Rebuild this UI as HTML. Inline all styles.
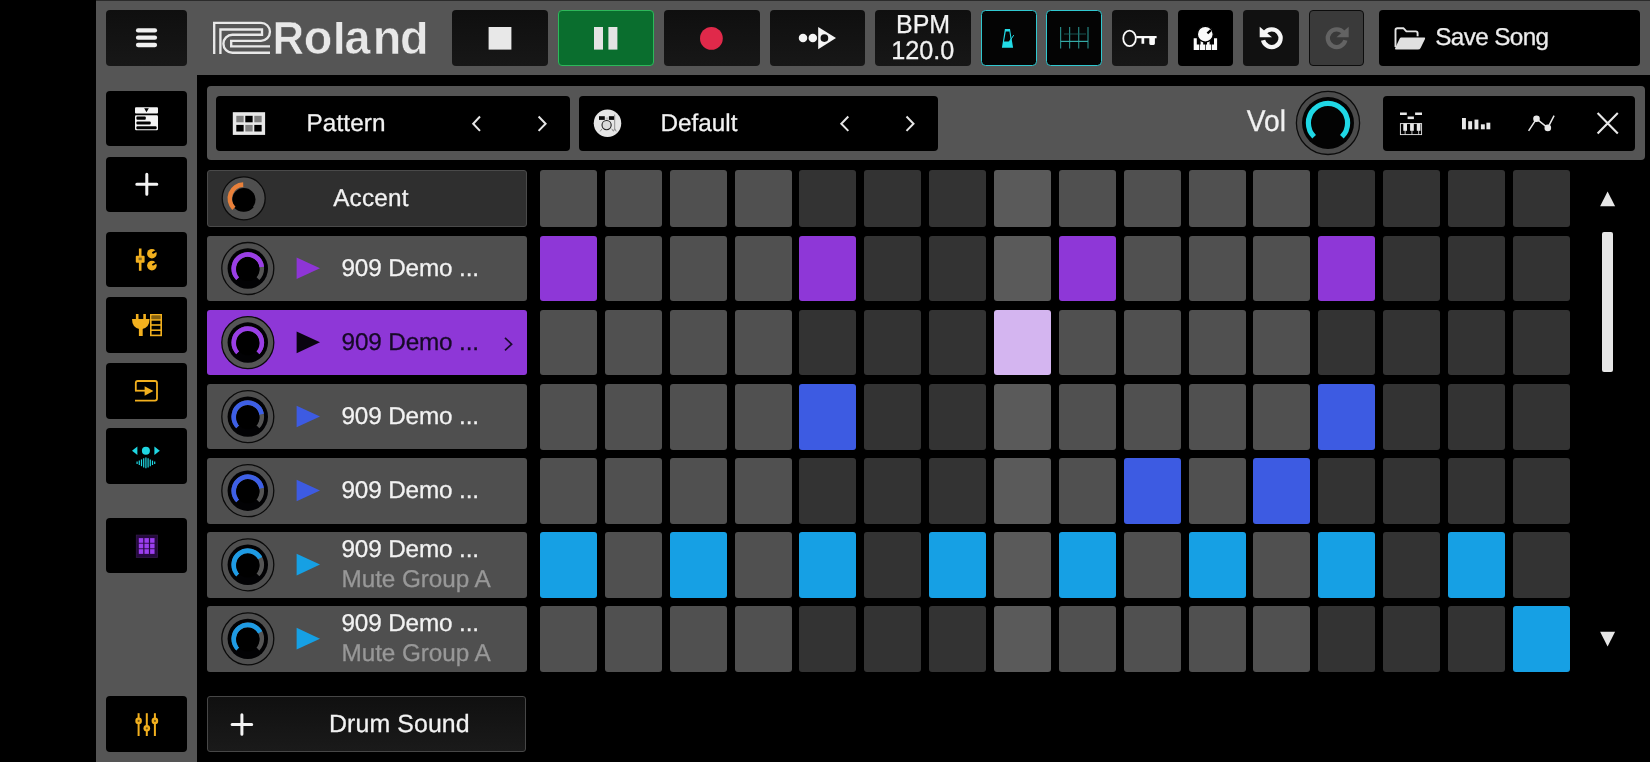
<!DOCTYPE html>
<html lang="en">
<head>
<meta charset="utf-8">
<title>Roland Zenbeats - Drum Pattern</title>
<style>
html,body{margin:0;padding:0;background:#000;}
body{width:1650px;height:762px;position:relative;overflow:hidden;font-family:"Liberation Sans",sans-serif;color:#f2f2f2;}
.abs{position:absolute;}
.gray{background:#555;}
.btn{position:absolute;border-radius:4px;background:linear-gradient(#0f0f0f,#171717);top:10px;height:55.5px;}
.sb{position:absolute;left:106px;width:81px;height:55.5px;border-radius:4px;background:#000;}
.txt{position:absolute;white-space:nowrap;font-size:23.6px;line-height:28px;height:28px;}
.row{position:absolute;left:207px;width:320px;height:65.5px;border-radius:3px;background:#4f4f4f;}
.cell{position:absolute;width:57px;border-radius:3px;}
.L{background:#505050;}
.D{background:#333;}
.P{background:#8e37d7;}
.Q{background:#d4b5f0;}
.B{background:#3d5be2;}
.C{background:#16a0e4;}
svg{position:absolute;left:0;top:0;overflow:visible;}
</style>
</head>
<body>

<div class="abs" style="left:96px;top:0;width:1554px;height:75px;background:#2b2b2b"></div>
<div class="abs gray" style="left:96px;top:1px;width:1554px;height:74px"></div>
<div class="abs gray" style="left:96px;top:70px;width:101px;height:692px"></div>
<div class="abs gray" style="left:207px;top:86px;width:1438px;height:74px;border-radius:4px"></div>
<div class="btn" style="left:106px;width:81px"></div>
<div class="btn" style="left:452px;width:96px"></div>
<div class="btn" style="left:558px;width:96px;top:9.5px;height:56px;background:#0a6e2e;box-sizing:border-box;border:1.5px solid #2db85a"></div>
<div class="btn" style="left:663.5px;width:96px"></div>
<div class="btn" style="left:769.5px;width:95.5px"></div>
<div class="btn" style="left:875px;width:95.5px"></div>
<div class="btn" style="left:980.5px;width:56px;top:9.8px;height:56.2px;background:#040404;box-sizing:border-box;border:1.6px solid #30c8d0;border-radius:4.5px"></div>
<div class="btn" style="left:1046.3px;width:56px;top:9.8px;height:56.2px;background:#040404;box-sizing:border-box;border:1.6px solid #30c8d0;border-radius:4.5px"></div>
<div class="btn" style="left:1112.3px;width:55.5px"></div>
<div class="btn" style="left:1178px;width:55px;background:#000"></div>
<div class="btn" style="left:1243px;width:55.5px;background:#111"></div>
<div class="btn" style="left:1309px;width:55px;background:#3a3a3a;box-sizing:border-box;border:1.5px solid #0c0c0c"></div>
<div class="btn" style="left:1379.3px;width:261px;background:#000"></div>
<svg width="1650" height="80" viewBox="0 0 1650 80" style="will-change:transform">
<rect x="135.9" y="28.25" width="21.2" height="4.3" rx="2.15" fill="#f0f0f0"/>
<rect x="135.9" y="35.55" width="21.2" height="4.3" rx="2.15" fill="#f0f0f0"/>
<rect x="135.9" y="42.85" width="21.2" height="4.3" rx="2.15" fill="#f0f0f0"/>
<g fill="none" stroke="#e8e8e8" stroke-width="2.35" stroke-linejoin="miter">
<path d="M214.2 54.1V22.9H261A8.95 8.95 0 0 1 261 40.8H231.2V46.3H270"/>
<path d="M220.4 54.1V29.5H262V34.7H232.4A9 9 0 0 0 232.4 52.7H270"/>
</g>
<clipPath id="rc"><rect x="270" y="21.9" width="170" height="40"/></clipPath>
<g clip-path="url(#rc)"><text id="roland" transform="translate(0 53.8) scale(0.96 1)" x="283.95 316.29 346.60 358.76 388.27 416.73" y="0" font-family="Liberation Sans, sans-serif" font-weight="bold" font-size="48.7" fill="#e8e8e8" stroke="#555" stroke-width="0.6"><tspan font-size="45.6">R</tspan>oland</text></g>
<rect x="488.6" y="27" width="22.8" height="22.6" fill="#e8e8e8"/>
<rect x="594" y="27" width="9" height="22.6" fill="#e4e4e4"/><rect x="608.4" y="27" width="9" height="22.6" fill="#e4e4e4"/>
<circle cx="711.4" cy="38.4" r="11.4" fill="#e0294a"/>
<circle cx="803" cy="38.1" r="4.25" fill="#f4f4f4"/><circle cx="812.8" cy="38.1" r="4.25" fill="#f4f4f4"/>
<path d="M818.2 26.9V49.3L836 38.1Z" fill="#f4f4f4"/><circle cx="824.4" cy="38.1" r="3.85" fill="#131313"/>
<path d="M1004.9 29H1010L1013.1 47.7H1001.9Z M1005.8 31.5L1004 41.5H1009.4L1010.6 39.4L1009.4 31.5Z" fill="#22dbe6" fill-rule="evenodd"/>
<path d="M1009 42L1013.8 35.1" stroke="#22dbe6" stroke-width="1" fill="none"/>
<g stroke="#258582" stroke-width="1.2" fill="none">
<path d="M1060.6 27V48.4"/>
<path d="M1069.6 27V48.4"/>
<path d="M1078.7 27V48.4"/>
<path d="M1088 27V48.4"/>
<path d="M1060.6 41.4H1088" stroke="#35aaa6"/><path d="M1064 34H1086" stroke="#1d6866" stroke-width="0.8"/>
</g>
<ellipse cx="1129.55" cy="38.4" rx="6.27" ry="7.72" fill="none" stroke="#fafafa" stroke-width="1.8"/>
<path d="M1136.2 35.9H1156.6V38.2H1154.9V43.6Q1154.9 44.9 1153.6 44.9H1150.6Q1149.3 44.9 1149.3 43.6V38.2H1144.2V43.8H1141.5V38.2H1136.2Z" fill="#fafafa"/>
<path d="M1193.7 38.2H1196.8V44.6H1199.2V50H1193.7ZM1200.6 40H1203.2V44.6H1205.1V50H1199.9V44.6H1200.6ZM1207 40H1209.6V44.6H1211.2V50H1205.8V44.6H1207ZM1214 38.2H1217.1V50H1211.9V44.6H1214Z" fill="#fafafa"/>
<circle cx="1205.3" cy="34.2" r="7.9" fill="#fafafa" stroke="#000" stroke-width="1.2"/><path d="M1207.4 33.3L1211 30.1" stroke="#000" stroke-width="2.3"/>
<path d="M1264.69 32.72A8.9 8.9 0 1 1 1263.06 40.35" fill="none" stroke="#f6f6f6" stroke-width="4.3"/>
<path d="M1259.7 26.8V37.3H1272Z" fill="#f6f6f6"/>
<g transform="translate(2608.4 0) scale(-1 1)"><path d="M1264.69 32.72A8.9 8.9 0 1 1 1263.06 40.35" fill="none" stroke="#636363" stroke-width="4.3"/><path d="M1259.7 26.8V37.3H1272Z" fill="#636363"/></g>
<path d="M1395.5 47V30.2Q1395.5 28.3 1397.4 28.3H1403.6L1406.4 31.4H1415.8Q1417.6 31.4 1417.6 33.2V36.2" fill="none" stroke="#e4e4e4" stroke-width="1.9" stroke-linejoin="round"/>
<path d="M1401.2 37.6H1424.2Q1425.6 37.6 1425 39L1420.6 47.9Q1419.8 49.6 1418 49.6H1396.6Q1394.4 49.6 1395.3 47.7L1399.6 38.8Q1400.2 37.6 1401.2 37.6Z" fill="#e0e0e0"/>
</svg>
<div class="sb" style="top:90.8px"></div>
<div class="sb" style="top:156.5px"></div>
<div class="sb" style="top:231.7px"></div>
<div class="sb" style="top:297.2px"></div>
<div class="sb" style="top:363px"></div>
<div class="sb" style="top:428.3px"></div>
<div class="sb" style="top:517.8px"></div>
<div class="sb" style="top:696px"></div>
<svg width="210" height="762" viewBox="0 0 210 762">
<rect x="135" y="107.3" width="23" height="6.2" rx="1" fill="#f4f4f4"/><path d="M144.2 108.3H148.8L146.5 112.2Z" fill="#000"/>
<rect x="135" y="115.2" width="23" height="15" rx="1.2" fill="#f4f4f4"/>
<rect x="136.4" y="116.4" width="9.4" height="3.3" rx="1" fill="#000"/><rect x="136.4" y="121.4" width="14.3" height="3.2" rx="1" fill="#000"/><rect x="136.4" y="126.2" width="20.2" height="3" rx="1" fill="#000"/>
<path d="M136.8 184.3H156.8M146.8 174.3V194.3" stroke="#f4f4f4" stroke-width="3" stroke-linecap="round"/>
<path d="M140.2 248.5V270.8" stroke="#f2b01e" stroke-width="2.6"/><rect x="135.8" y="255.8" width="8.8" height="7" rx="1" fill="#f2b01e"/><rect x="138.6" y="257.6" width="3.2" height="2.6" fill="#8a6a20"/>
<circle cx="151.9" cy="253.7" r="4.8" fill="#f2b01e"/><path d="M152.4 253.1L157.5 250.1" stroke="#000" stroke-width="2"/>
<circle cx="151.9" cy="265.6" r="4.8" fill="#f2b01e"/><path d="M152.4 265.0L157.5 262.0" stroke="#000" stroke-width="2"/>
<rect x="135.9" y="314" width="2.6" height="5" fill="#f2b01e"/><rect x="143.3" y="314" width="2.6" height="5" fill="#f2b01e"/>
<path d="M132 319H149.6Q149.6 328.6 140.8 329.4Q132 328.6 132 319Z" fill="#f2b01e"/><rect x="138.9" y="328" width="3.8" height="8" fill="#f2b01e"/>
<rect x="150.8" y="314.8" width="10.4" height="20.6" fill="none" stroke="#f2b01e" stroke-width="1.6"/>
<path d="M150.8 319.9H161.2" stroke="#f2b01e" stroke-width="1.6"/>
<path d="M150.8 325H161.2" stroke="#f2b01e" stroke-width="1.6"/>
<path d="M150.8 330.2H161.2" stroke="#f2b01e" stroke-width="1.6"/>
<rect x="151.6" y="315.6" width="8.8" height="3.4" fill="#f2b01e" opacity="0.55"/>
<path d="M135.8 390.6V383Q135.8 381 137.8 381H155Q157 381 157 383V398.6Q157 400.6 155 400.6H135" fill="none" stroke="#f2b01e" stroke-width="1.8"/>
<path d="M135 390.7H146" stroke="#f2b01e" stroke-width="1.8"/><path d="M144.6 386.2V395.8L153.4 391Z" fill="#f2b01e"/>
<circle cx="145.9" cy="450.7" r="4" fill="#1fd6e2"/><path d="M137.4 446.6V455L132 450.8Z" fill="#1fd6e2"/><path d="M154.4 446.6V455L159.8 450.8Z" fill="#1fd6e2"/>
<path d="M137.1 461.5V464.1" stroke="#1fd6e2" stroke-width="1.2"/>
<path d="M139.3 460.6V465.0" stroke="#1fd6e2" stroke-width="1.2"/>
<path d="M141.5 459.4V466.2" stroke="#1fd6e2" stroke-width="1.2"/>
<path d="M143.7 458.2V467.4" stroke="#1fd6e2" stroke-width="1.2"/>
<path d="M145.9 457.4V468.2" stroke="#1fd6e2" stroke-width="1.2"/>
<path d="M148.1 458.2V467.4" stroke="#1fd6e2" stroke-width="1.2"/>
<path d="M150.3 459.4V466.2" stroke="#1fd6e2" stroke-width="1.2"/>
<path d="M152.5 460.6V465.0" stroke="#1fd6e2" stroke-width="1.2"/>
<path d="M154.7 461.5V464.1" stroke="#1fd6e2" stroke-width="1.2"/>
<rect x="136.3" y="535.1" width="21.2" height="22.3" fill="#26093f" stroke="#33194a" stroke-width="0.8"/>
<rect x="138.80" y="538.10" width="4.45" height="4.7" fill="#9b3fee"/>
<rect x="144.45" y="538.10" width="4.45" height="4.7" fill="#9b3fee"/>
<rect x="150.10" y="538.10" width="4.45" height="4.7" fill="#9b3fee"/>
<rect x="138.80" y="543.65" width="4.45" height="4.7" fill="#9b3fee"/>
<rect x="144.45" y="543.65" width="4.45" height="4.7" fill="#9b3fee"/>
<rect x="150.10" y="543.65" width="4.45" height="4.7" fill="#9b3fee"/>
<rect x="138.80" y="549.20" width="4.45" height="4.7" fill="#9b3fee"/>
<rect x="144.45" y="549.20" width="4.45" height="4.7" fill="#9b3fee"/>
<rect x="150.10" y="549.20" width="4.45" height="4.7" fill="#9b3fee"/>
<path d="M138.6 713.2V736" stroke="#f2b01e" stroke-width="2"/><circle cx="138.6" cy="720.9" r="3.3" fill="#f2b01e"/><circle cx="138.6" cy="720.9" r="1.1" fill="#7a5a10"/>
<path d="M146.8 713.2V736" stroke="#f2b01e" stroke-width="2"/><circle cx="146.8" cy="728.3" r="3.3" fill="#f2b01e"/><circle cx="146.8" cy="728.3" r="1.1" fill="#7a5a10"/>
<path d="M154.9 713.2V736" stroke="#f2b01e" stroke-width="2"/><circle cx="154.9" cy="720.9" r="3.3" fill="#f2b01e"/><circle cx="154.9" cy="720.9" r="1.1" fill="#7a5a10"/>
</svg>
<div class="abs" style="left:216.3px;top:95.6px;width:353.5px;height:55.3px;border-radius:4px;background:#000"></div>
<div class="abs" style="left:579.4px;top:95.6px;width:358.6px;height:55.3px;border-radius:4px;background:#000"></div>
<div class="abs" style="left:1382.8px;top:95.6px;width:252.3px;height:55.3px;border-radius:4px;background:#000"></div>
<svg width="1650" height="170" viewBox="0 0 1650 170">
<rect x="232.8" y="112.2" width="32.3" height="22.7" fill="#e8e8e8"/>
<rect x="236.3" y="115.8" width="7.35" height="6.5" fill="#808080"/>
<rect x="245.3" y="115.8" width="7.35" height="6.5" fill="#000"/>
<rect x="254.3" y="115.8" width="7.35" height="6.5" fill="#808080"/>
<rect x="236.3" y="124.9" width="7.35" height="6.6" fill="#000"/>
<rect x="245.3" y="124.9" width="7.35" height="6.6" fill="#808080"/>
<rect x="254.3" y="124.9" width="7.35" height="6.6" fill="#000"/>
<path d="M480 116.5L473.2 123.7L480 130.9" fill="none" stroke="#e6e6e6" stroke-width="2"/>
<path d="M538.6 116.5L545.6 123.7L538.6 130.9" fill="none" stroke="#e6e6e6" stroke-width="2"/>
<path d="M848.3 116.5L841.3 123.7L848.3 130.9" fill="none" stroke="#e6e6e6" stroke-width="2"/>
<path d="M906.5 116.5L913.5 123.7L906.5 130.9" fill="none" stroke="#e6e6e6" stroke-width="2"/>
<circle cx="607.5" cy="123.2" r="13.75" fill="#e6e6e6"/>
<g fill="#0a0a0a" stroke="#222">
<rect x="599" y="116.2" width="5.8" height="3.7" stroke="none"/><rect x="608.9" y="116.2" width="5.2" height="3.7" stroke="none"/>
<rect x="605.6" y="117.4" width="2.6" height="2.2" fill="#bdbdbd" stroke="none"/>
<circle cx="606.6" cy="125.1" r="4.6" fill="#dadada" stroke-width="1.1"/>
<path d="M614.7 114.6V128.5M602 128.8L600.2 131.4M611.8 128.8L613.4 131.4M614.7 128.5L616.2 131.4M614.7 128.5L613.6 131" fill="none" stroke="#777" stroke-width="0.8"/>
</g>
<circle cx="1328" cy="122.9" r="31.6" fill="#4b4b4b" stroke="#0b0b0b" stroke-width="1.3"/>
<circle cx="1328" cy="122.9" r="26" fill="#030303"/>
<path d="M1314.14 136.76A19.6 19.6 0 1 1 1341.86 136.76" fill="none" stroke="#1fd8e6" stroke-width="5.2"/>
<rect x="1400" y="112.5" width="6.8" height="2.5" fill="#e8e8e8"/><rect x="1415.1" y="112.5" width="6.9" height="2.5" fill="#e8e8e8"/><rect x="1407.6" y="116.5" width="6.3" height="2.6" fill="#e8e8e8"/>
<rect x="1400.4" y="123.6" width="21.2" height="11" fill="none" stroke="#e8e8e8" stroke-width="0.9"/>
<rect x="1403.3" y="123.6" width="3.7" height="7.2" fill="#e8e8e8"/>
<path d="M1405.1499999999999 130V134.6" stroke="#e8e8e8" stroke-width="0.8"/>
<rect x="1410.1" y="123.6" width="3.7" height="7.2" fill="#e8e8e8"/>
<path d="M1411.9499999999998 130V134.6" stroke="#e8e8e8" stroke-width="0.8"/>
<rect x="1416.8" y="123.6" width="3.7" height="7.2" fill="#e8e8e8"/>
<path d="M1418.6499999999999 130V134.6" stroke="#e8e8e8" stroke-width="0.8"/>
<rect x="1462" y="118" width="3.9" height="11.3" fill="#e8e8e8"/>
<rect x="1468.2" y="121.2" width="3.9" height="8.1" fill="#e8e8e8"/>
<rect x="1474.5" y="119.6" width="3.9" height="9.7" fill="#e8e8e8"/>
<rect x="1480.9" y="124.3" width="3.9" height="5.0" fill="#e8e8e8"/>
<rect x="1486.4" y="122.7" width="3.9" height="6.6" fill="#e8e8e8"/>
<path d="M1528.6 130.9L1536.5 118.8L1547.8 127.9L1554.1 115.6" fill="none" stroke="#e8e8e8" stroke-width="1.5"/><circle cx="1536.5" cy="118.8" r="3.3" fill="#e8e8e8"/><circle cx="1547.8" cy="127.9" r="3.3" fill="#e8e8e8"/>
<path d="M1597.6 113L1617.8 133.4M1617.8 113L1597.6 133.4" stroke="#e8e8e8" stroke-width="2.1"/>
</svg>
<div class="row" style="top:170.2px;height:56.6px;background:#2f2f2f;box-sizing:border-box;border:1px solid #4a4a4a"></div>
<div class="row" style="top:235.80px"></div>
<div class="row" style="top:309.87px;background:#8e37d7"></div>
<div class="row" style="top:383.94px"></div>
<div class="row" style="top:458.01px"></div>
<div class="row" style="top:532.08px"></div>
<div class="row" style="top:606.15px"></div>
<div class="abs" style="left:530px;top:165px;width:1039.6px;height:512px;overflow:hidden">
<div class="cell L" style="left:9.90px;top:5.00px;height:57.3px"></div>
<div class="cell L" style="left:74.77px;top:5.00px;height:57.3px"></div>
<div class="cell L" style="left:139.64px;top:5.00px;height:57.3px"></div>
<div class="cell L" style="left:204.51px;top:5.00px;height:57.3px"></div>
<div class="cell D" style="left:269.38px;top:5.00px;height:57.3px"></div>
<div class="cell D" style="left:334.25px;top:5.00px;height:57.3px"></div>
<div class="cell D" style="left:399.12px;top:5.00px;height:57.3px"></div>
<div class="cell L" style="left:463.99px;top:5.00px;height:57.3px;background:#5a5a5a"></div>
<div class="cell L" style="left:528.86px;top:5.00px;height:57.3px"></div>
<div class="cell L" style="left:593.73px;top:5.00px;height:57.3px"></div>
<div class="cell L" style="left:658.60px;top:5.00px;height:57.3px"></div>
<div class="cell L" style="left:723.47px;top:5.00px;height:57.3px"></div>
<div class="cell D" style="left:788.34px;top:5.00px;height:57.3px"></div>
<div class="cell D" style="left:853.21px;top:5.00px;height:57.3px"></div>
<div class="cell D" style="left:918.08px;top:5.00px;height:57.3px"></div>
<div class="cell D" style="left:982.95px;top:5.00px;height:57.3px"></div>
<div class="cell P" style="left:9.90px;top:70.80px;height:65.6px"></div>
<div class="cell L" style="left:74.77px;top:70.80px;height:65.6px"></div>
<div class="cell L" style="left:139.64px;top:70.80px;height:65.6px"></div>
<div class="cell L" style="left:204.51px;top:70.80px;height:65.6px"></div>
<div class="cell P" style="left:269.38px;top:70.80px;height:65.6px"></div>
<div class="cell D" style="left:334.25px;top:70.80px;height:65.6px"></div>
<div class="cell D" style="left:399.12px;top:70.80px;height:65.6px"></div>
<div class="cell L" style="left:463.99px;top:70.80px;height:65.6px;background:#5a5a5a"></div>
<div class="cell P" style="left:528.86px;top:70.80px;height:65.6px"></div>
<div class="cell L" style="left:593.73px;top:70.80px;height:65.6px"></div>
<div class="cell L" style="left:658.60px;top:70.80px;height:65.6px"></div>
<div class="cell L" style="left:723.47px;top:70.80px;height:65.6px"></div>
<div class="cell P" style="left:788.34px;top:70.80px;height:65.6px"></div>
<div class="cell D" style="left:853.21px;top:70.80px;height:65.6px"></div>
<div class="cell D" style="left:918.08px;top:70.80px;height:65.6px"></div>
<div class="cell D" style="left:982.95px;top:70.80px;height:65.6px"></div>
<div class="cell L" style="left:9.90px;top:144.87px;height:65.6px"></div>
<div class="cell L" style="left:74.77px;top:144.87px;height:65.6px"></div>
<div class="cell L" style="left:139.64px;top:144.87px;height:65.6px"></div>
<div class="cell L" style="left:204.51px;top:144.87px;height:65.6px"></div>
<div class="cell D" style="left:269.38px;top:144.87px;height:65.6px"></div>
<div class="cell D" style="left:334.25px;top:144.87px;height:65.6px"></div>
<div class="cell D" style="left:399.12px;top:144.87px;height:65.6px"></div>
<div class="cell Q" style="left:463.99px;top:144.87px;height:65.6px"></div>
<div class="cell L" style="left:528.86px;top:144.87px;height:65.6px"></div>
<div class="cell L" style="left:593.73px;top:144.87px;height:65.6px"></div>
<div class="cell L" style="left:658.60px;top:144.87px;height:65.6px"></div>
<div class="cell L" style="left:723.47px;top:144.87px;height:65.6px"></div>
<div class="cell D" style="left:788.34px;top:144.87px;height:65.6px"></div>
<div class="cell D" style="left:853.21px;top:144.87px;height:65.6px"></div>
<div class="cell D" style="left:918.08px;top:144.87px;height:65.6px"></div>
<div class="cell D" style="left:982.95px;top:144.87px;height:65.6px"></div>
<div class="cell L" style="left:9.90px;top:218.94px;height:65.6px"></div>
<div class="cell L" style="left:74.77px;top:218.94px;height:65.6px"></div>
<div class="cell L" style="left:139.64px;top:218.94px;height:65.6px"></div>
<div class="cell L" style="left:204.51px;top:218.94px;height:65.6px"></div>
<div class="cell B" style="left:269.38px;top:218.94px;height:65.6px"></div>
<div class="cell D" style="left:334.25px;top:218.94px;height:65.6px"></div>
<div class="cell D" style="left:399.12px;top:218.94px;height:65.6px"></div>
<div class="cell L" style="left:463.99px;top:218.94px;height:65.6px;background:#5a5a5a"></div>
<div class="cell L" style="left:528.86px;top:218.94px;height:65.6px"></div>
<div class="cell L" style="left:593.73px;top:218.94px;height:65.6px"></div>
<div class="cell L" style="left:658.60px;top:218.94px;height:65.6px"></div>
<div class="cell L" style="left:723.47px;top:218.94px;height:65.6px"></div>
<div class="cell B" style="left:788.34px;top:218.94px;height:65.6px"></div>
<div class="cell D" style="left:853.21px;top:218.94px;height:65.6px"></div>
<div class="cell D" style="left:918.08px;top:218.94px;height:65.6px"></div>
<div class="cell D" style="left:982.95px;top:218.94px;height:65.6px"></div>
<div class="cell L" style="left:9.90px;top:293.01px;height:65.6px"></div>
<div class="cell L" style="left:74.77px;top:293.01px;height:65.6px"></div>
<div class="cell L" style="left:139.64px;top:293.01px;height:65.6px"></div>
<div class="cell L" style="left:204.51px;top:293.01px;height:65.6px"></div>
<div class="cell D" style="left:269.38px;top:293.01px;height:65.6px"></div>
<div class="cell D" style="left:334.25px;top:293.01px;height:65.6px"></div>
<div class="cell D" style="left:399.12px;top:293.01px;height:65.6px"></div>
<div class="cell L" style="left:463.99px;top:293.01px;height:65.6px;background:#5a5a5a"></div>
<div class="cell L" style="left:528.86px;top:293.01px;height:65.6px"></div>
<div class="cell B" style="left:593.73px;top:293.01px;height:65.6px"></div>
<div class="cell L" style="left:658.60px;top:293.01px;height:65.6px"></div>
<div class="cell B" style="left:723.47px;top:293.01px;height:65.6px"></div>
<div class="cell D" style="left:788.34px;top:293.01px;height:65.6px"></div>
<div class="cell D" style="left:853.21px;top:293.01px;height:65.6px"></div>
<div class="cell D" style="left:918.08px;top:293.01px;height:65.6px"></div>
<div class="cell D" style="left:982.95px;top:293.01px;height:65.6px"></div>
<div class="cell C" style="left:9.90px;top:367.08px;height:65.6px"></div>
<div class="cell L" style="left:74.77px;top:367.08px;height:65.6px"></div>
<div class="cell C" style="left:139.64px;top:367.08px;height:65.6px"></div>
<div class="cell L" style="left:204.51px;top:367.08px;height:65.6px"></div>
<div class="cell C" style="left:269.38px;top:367.08px;height:65.6px"></div>
<div class="cell D" style="left:334.25px;top:367.08px;height:65.6px"></div>
<div class="cell C" style="left:399.12px;top:367.08px;height:65.6px"></div>
<div class="cell L" style="left:463.99px;top:367.08px;height:65.6px;background:#5a5a5a"></div>
<div class="cell C" style="left:528.86px;top:367.08px;height:65.6px"></div>
<div class="cell L" style="left:593.73px;top:367.08px;height:65.6px"></div>
<div class="cell C" style="left:658.60px;top:367.08px;height:65.6px"></div>
<div class="cell L" style="left:723.47px;top:367.08px;height:65.6px"></div>
<div class="cell C" style="left:788.34px;top:367.08px;height:65.6px"></div>
<div class="cell D" style="left:853.21px;top:367.08px;height:65.6px"></div>
<div class="cell C" style="left:918.08px;top:367.08px;height:65.6px"></div>
<div class="cell D" style="left:982.95px;top:367.08px;height:65.6px"></div>
<div class="cell L" style="left:9.90px;top:441.15px;height:65.6px"></div>
<div class="cell L" style="left:74.77px;top:441.15px;height:65.6px"></div>
<div class="cell L" style="left:139.64px;top:441.15px;height:65.6px"></div>
<div class="cell L" style="left:204.51px;top:441.15px;height:65.6px"></div>
<div class="cell D" style="left:269.38px;top:441.15px;height:65.6px"></div>
<div class="cell D" style="left:334.25px;top:441.15px;height:65.6px"></div>
<div class="cell D" style="left:399.12px;top:441.15px;height:65.6px"></div>
<div class="cell L" style="left:463.99px;top:441.15px;height:65.6px;background:#5a5a5a"></div>
<div class="cell L" style="left:528.86px;top:441.15px;height:65.6px"></div>
<div class="cell L" style="left:593.73px;top:441.15px;height:65.6px"></div>
<div class="cell L" style="left:658.60px;top:441.15px;height:65.6px"></div>
<div class="cell L" style="left:723.47px;top:441.15px;height:65.6px"></div>
<div class="cell D" style="left:788.34px;top:441.15px;height:65.6px"></div>
<div class="cell D" style="left:853.21px;top:441.15px;height:65.6px"></div>
<div class="cell D" style="left:918.08px;top:441.15px;height:65.6px"></div>
<div class="cell C" style="left:982.95px;top:441.15px;height:65.6px"></div>
</div>
<div class="abs" style="left:1601.8px;top:232px;width:11.7px;height:140px;border-radius:2px;background:#e6e6e6"></div>
<div class="abs" style="left:207px;top:696px;width:319px;height:56px;box-sizing:border-box;border:1px solid #474747;border-radius:3px;background:linear-gradient(#101010,#1a1a1a)"></div>
<svg width="1650" height="762" viewBox="0 0 1650 762">
<path d="M1607.6 191.6L1615.1 206.3H1600.1Z" fill="#e6e6e6"/><path d="M1600.1 631.8H1615.1L1607.6 646.5Z" fill="#e6e6e6"/>
<path d="M232.1 724.5H251.7M241.9 714.7V734.3" stroke="#f4f4f4" stroke-width="3" stroke-linecap="round"/>
<circle cx="243.7" cy="198.3" r="21.5" fill="#4f4f4f" stroke="#0b0b0b" stroke-width="1.3"/>
<circle cx="243.9" cy="199.6" r="11.6" fill="#000"/>
<path d="M252.13 205.87A11 11 0 0 1 235.27 205.87" fill="none" stroke="#000" stroke-width="4"/>
<path d="M233.87 208.33A13.9 13.9 0 0 1 243.21 184.61" fill="none" stroke="#e8803a" stroke-width="4.6"/>
<circle cx="247.8" cy="268.50" r="26" fill="#4f4f4f" stroke="#0b0b0b" stroke-width="1.3"/>
<circle cx="247.8" cy="268.50" r="20.2" fill="#020204"/>
<path d="M237.90 278.40A14 14 0 1 1 257.70 278.40" fill="none" stroke="#555" stroke-width="4.6"/>
<path d="M237.90 278.40A14 14 0 1 1 261.72 267.04" fill="none" stroke="#9a3ee6" stroke-width="4.8"/>
<circle cx="247.8" cy="269.50" r="11.6" fill="#000"/>
<path d="M296.6 257.50V279.10L320 268.30Z" fill="#8e35d6"/>
<circle cx="247.8" cy="342.57" r="26" fill="#555" stroke="#0b0b0b" stroke-width="1.3"/>
<circle cx="247.8" cy="342.57" r="20.2" fill="#020204"/>
<path d="M237.90 352.47A14 14 0 1 1 257.70 352.47" fill="none" stroke="#555" stroke-width="4.6"/>
<path d="M237.90 352.47A14 14 0 1 1 257.70 352.47" fill="none" stroke="#9a3ee6" stroke-width="4.8"/>
<circle cx="247.8" cy="343.57" r="11.6" fill="#000"/>
<path d="M296.6 331.57V353.17L320 342.37Z" fill="#0a0410"/>
<circle cx="247.8" cy="416.64" r="26" fill="#4f4f4f" stroke="#0b0b0b" stroke-width="1.3"/>
<circle cx="247.8" cy="416.64" r="20.2" fill="#020204"/>
<path d="M237.90 426.54A14 14 0 1 1 257.70 426.54" fill="none" stroke="#555" stroke-width="4.6"/>
<path d="M237.90 426.54A14 14 0 1 1 261.59 414.21" fill="none" stroke="#3d5fe6" stroke-width="4.8"/>
<circle cx="247.8" cy="417.64" r="11.6" fill="#000"/>
<path d="M296.6 405.64V427.24L320 416.44Z" fill="#3d5be2"/>
<circle cx="247.8" cy="490.71" r="26" fill="#4f4f4f" stroke="#0b0b0b" stroke-width="1.3"/>
<circle cx="247.8" cy="490.71" r="20.2" fill="#020204"/>
<path d="M237.90 500.61A14 14 0 1 1 257.70 500.61" fill="none" stroke="#555" stroke-width="4.6"/>
<path d="M237.90 500.61A14 14 0 1 1 261.59 488.28" fill="none" stroke="#3d5fe6" stroke-width="4.8"/>
<circle cx="247.8" cy="491.71" r="11.6" fill="#000"/>
<path d="M296.6 479.71V501.31L320 490.51Z" fill="#3d5be2"/>
<circle cx="247.8" cy="564.78" r="26" fill="#4f4f4f" stroke="#0b0b0b" stroke-width="1.3"/>
<circle cx="247.8" cy="564.78" r="20.2" fill="#020204"/>
<path d="M237.90 574.68A14 14 0 1 1 257.70 574.68" fill="none" stroke="#555" stroke-width="4.6"/>
<path d="M237.90 574.68A14 14 0 1 1 260.16 558.21" fill="none" stroke="#1e9be4" stroke-width="4.8"/>
<circle cx="247.8" cy="565.78" r="11.6" fill="#000"/>
<path d="M296.6 553.78V575.38L320 564.58Z" fill="#16a0e4"/>
<circle cx="247.8" cy="638.85" r="26" fill="#4f4f4f" stroke="#0b0b0b" stroke-width="1.3"/>
<circle cx="247.8" cy="638.85" r="20.2" fill="#020204"/>
<path d="M237.90 648.75A14 14 0 1 1 257.70 648.75" fill="none" stroke="#555" stroke-width="4.6"/>
<path d="M237.90 648.75A14 14 0 1 1 260.16 632.28" fill="none" stroke="#1e9be4" stroke-width="4.8"/>
<circle cx="247.8" cy="639.85" r="11.6" fill="#000"/>
<path d="M296.6 627.85V649.45L320 638.65Z" fill="#16a0e4"/>
<path d="M505 337.97L511.6 344.17L505 350.37" fill="none" stroke="#1a0b2c" stroke-width="1.7"/>
</svg>
<svg width="1650" height="762" viewBox="0 0 1650 762" style="will-change:transform" font-family="Liberation Sans, sans-serif" text-rendering="geometricPrecision">
<text id="pattern" x="306.39" y="130.55" font-size="24.3" letter-spacing="0.142" fill="#f2f2f2" stroke="#f2f2f2" stroke-width="0.28">Pattern</text>
<text id="default" x="660.39" y="130.55" font-size="24.3" letter-spacing="0.013" fill="#f2f2f2" stroke="#f2f2f2" stroke-width="0.28">Default</text>
<text id="vol" transform="translate(1246.75 131.05) scale(0.9448 1)" font-size="29.8" fill="#f2f2f2" stroke="#f2f2f2" stroke-width="0.28">Vol</text>
<text id="accent" x="333.19" y="205.75" font-size="24.3" letter-spacing="0.200" fill="#f2f2f2" stroke="#f2f2f2" stroke-width="0.28">Accent</text>
<text id="r0a" x="341.47" y="275.75" font-size="24.3" letter-spacing="-0.138" fill="#f2f2f2" stroke="#f2f2f2" stroke-width="0.28">909 Demo ...</text>
<text id="r1a" x="341.55" y="349.82" font-size="24.3" letter-spacing="-0.148" fill="#160a26" stroke="#160a26" stroke-width="0.28">909 Demo ...</text>
<text id="r2a" x="341.47" y="423.89" font-size="24.3" letter-spacing="-0.138" fill="#f2f2f2" stroke="#f2f2f2" stroke-width="0.28">909 Demo ...</text>
<text id="r3a" x="341.47" y="497.96" font-size="24.3" letter-spacing="-0.138" fill="#f2f2f2" stroke="#f2f2f2" stroke-width="0.28">909 Demo ...</text>
<text id="r4a" x="341.47" y="556.93" font-size="24.3" letter-spacing="-0.138" fill="#f2f2f2" stroke="#f2f2f2" stroke-width="0.28">909 Demo ...</text>
<text id="r4b" x="341.56" y="586.53" font-size="24.3" letter-spacing="-0.076" fill="#989898" stroke="#989898" stroke-width="0.28">Mute Group A</text>
<text id="r5a" x="341.47" y="631.00" font-size="24.3" letter-spacing="-0.138" fill="#f2f2f2" stroke="#f2f2f2" stroke-width="0.28">909 Demo ...</text>
<text id="r5b" x="341.56" y="660.60" font-size="24.3" letter-spacing="-0.076" fill="#989898" stroke="#989898" stroke-width="0.28">Mute Group A</text>
<text id="save" x="1435.19" y="45.05" font-size="24.3" letter-spacing="-0.616" fill="#ececec" stroke="#ececec" stroke-width="0.28">Save Song</text>
<text id="bpm1" transform="translate(896.00 33.15) scale(0.9596 1)" font-size="26.0" fill="#f2f2f2" stroke="#f2f2f2" stroke-width="0.28">BPM</text>
<text id="bpm2" transform="translate(891.15 58.55) scale(0.9748 1)" font-size="25.9" fill="#f2f2f2" stroke="#f2f2f2" stroke-width="0.28">120.0</text>
<text id="drum" x="329.03" y="731.65" font-size="24.9" letter-spacing="0.096" fill="#f2f2f2" stroke="#f2f2f2" stroke-width="0.28">Drum Sound</text>
</svg>
</body>
</html>
